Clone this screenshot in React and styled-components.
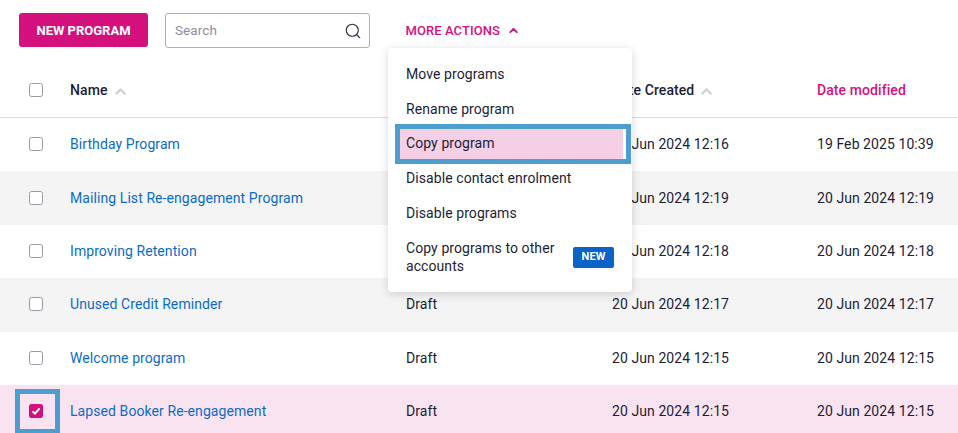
import React from 'react';
import styled, { createGlobalStyle } from 'styled-components';
import { ChevronUp, Search as SearchIcon } from 'lucide-react';

const GlobalStyle = createGlobalStyle`
  html, body {
    margin: 0;
    padding: 0;
    background: #fff;
    overflow: hidden;
  }
  body {
    font-family: Roboto, "Liberation Sans", sans-serif;
    font-size: 14px;
    letter-spacing: 0.08px;
    color: #1d1d36;
  }
`;

const Page = styled.div`
  position: relative;
  width: 958px;
  height: 433px;
  overflow: hidden;
`;

const Toolbar = styled.div`
  display: flex;
  align-items: flex-start;
  height: 62px;
  padding: 13px 0 0 19px;
  box-sizing: border-box;
`;

const PrimaryButton = styled.button`
  width: 129px;
  height: 34px;
  border: 0;
  border-radius: 3px;
  background: #d4107d;
  color: #fff;
  font: 700 13px Roboto, sans-serif;
  padding: 0;
`;

const SearchBox = styled.div`
  display: flex;
  align-items: center;
  justify-content: space-between;
  width: 205px;
  height: 35px;
  margin-left: 17px;
  padding: 0 7px 2px 9px;
  box-sizing: border-box;
  border: 1px solid #aeaeb6;
  border-radius: 3px;
  color: #8e8e9a;
  font-size: 13.5px;
  svg {
    margin-top: 3px;
    color: #30304a;
  }
`;

const ActionsToggle = styled.div`
  display: flex;
  align-items: center;
  gap: 7px;
  height: 34px;
  margin-left: 35.5px;
  color: #d4107d;
  font-size: 13px;
  font-weight: 500;
`;

const Row = styled.div`
  display: grid;
  grid-template-columns: 70px 336px 206px 205px 141px;
  align-items: center;
  box-sizing: border-box;
  height: ${(p) => (p.$header ? '56px' : '53.4px')};
  padding-bottom: ${(p) => (p.$header ? '0' : '1px')};
  background: ${(p) => p.$bg || '#fff'};
  border-bottom: ${(p) => (p.$header ? '1px solid #dedee0' : '0')};
`;

const CheckCell = styled.div`
  position: relative;
  display: flex;
  padding-left: 29px;
`;

const Checkbox = styled.span`
  display: flex;
  align-items: center;
  justify-content: center;
  width: ${(p) => (p.$checked ? '14px' : '12px')};
  height: ${(p) => (p.$checked ? '14px' : '12px')};
  border: ${(p) => (p.$checked ? '0' : '1px solid #9a9aa6')};
  border-radius: 2.5px;
  background: ${(p) => (p.$checked ? '#d4107d' : '#fff')};
`;

const HeaderCell = styled.div`
  display: flex;
  align-items: center;
  gap: 4px;
  font-weight: 500;
  color: ${(p) => (p.$active ? '#d4107d' : '#1d1d36')};
  svg {
    margin-top: 3px;
    color: #d0d0d3;
  }
`;

const NameLink = styled.a`
  color: #0a6cc9;
  font-size: 14px;
`;

const Cell = styled.div`
  font-size: 14px;
`;

const Callout = styled.div`
  position: absolute;
  box-sizing: border-box;
  border: 5px solid #4c9dd0;
  pointer-events: none;
`;

const CheckCallout = styled(Callout)`
  left: 15px;
  top: -15px;
  width: 45px;
  height: 45px;
`;

const Menu = styled.div`
  position: absolute;
  left: 388px;
  top: 48px;
  width: 244px;
  height: 244px;
  padding-top: 8.4px;
  box-sizing: border-box;
  background: #fff;
  border-radius: 4px;
  box-shadow: 0 2px 10px rgba(0, 0, 0, 0.16);
`;

const MenuItem = styled.div`
  position: relative;
  display: flex;
  align-items: center;
  justify-content: space-between;
  margin: ${(p) => (p.$tall ? '4px' : '0')} ${(p) => (p.$tall ? '18px' : '9px')} 0
    ${(p) => (p.$selected ? '12px' : '18px')};
  padding-left: ${(p) => (p.$selected ? '6px' : '0')};
  height: ${(p) => (p.$tall ? '46px' : '34.8px')};
  line-height: 18px;
  font-size: 14px;
  background: ${(p) => (p.$selected ? '#f5cfe5' : 'transparent')};
`;

const MenuLabel = styled.span`
  width: 160px;
`;

const NewBadge = styled.span`
  display: flex;
  align-items: center;
  justify-content: center;
  width: 41px;
  height: 21px;
  border-radius: 2px;
  background: #0a64c8;
  color: #fff;
  font-size: 11px;
  font-weight: 700;
`;

const MenuCallout = styled(Callout)`
  left: 7px;
  top: 76px;
  width: 236px;
  height: 40px;
`;

// the status of the first three rows sits behind the open menu
const rows = [
  ['Birthday Program', '', '20 Jun 2024 12:16', '19 Feb 2025 10:39'],
  ['Mailing List Re-engagement Program', '', '20 Jun 2024 12:19', '20 Jun 2024 12:19'],
  ['Improving Retention', '', '20 Jun 2024 12:18', '20 Jun 2024 12:18'],
  ['Unused Credit Reminder', 'Draft', '20 Jun 2024 12:17', '20 Jun 2024 12:17'],
  ['Welcome program', 'Draft', '20 Jun 2024 12:15', '20 Jun 2024 12:15'],
  ['Lapsed Booker Re-engagement', 'Draft', '20 Jun 2024 12:15', '20 Jun 2024 12:15'],
];

function rowBg(i) {
  if (i === 5) return '#fae3f0';
  return i % 2 === 1 ? '#f4f4f4' : '#fff';
}

export default function App() {
  return (
    <Page>
      <GlobalStyle />
      <Toolbar>
        <PrimaryButton>NEW PROGRAM</PrimaryButton>
        <SearchBox>
          Search
          <SearchIcon size={18} strokeWidth={1.5} />
        </SearchBox>
        <ActionsToggle>
          MORE ACTIONS
          <ChevronUp size={13} strokeWidth={3.5} />
        </ActionsToggle>
      </Toolbar>
      <Row $header>
        <CheckCell>
          <Checkbox />
        </CheckCell>
        <HeaderCell>
          Name
          <ChevronUp size={17} strokeWidth={3} />
        </HeaderCell>
        <HeaderCell />
        <HeaderCell>
          Date Created
          <ChevronUp size={17} strokeWidth={3} />
        </HeaderCell>
        <HeaderCell $active>Date modified</HeaderCell>
      </Row>
      {rows.map((r, i) => (
        <Row key={r[0]} $bg={rowBg(i)}>
          <CheckCell>
            {i === 5 ? (
              <>
                <Checkbox $checked>
                  <svg width="10" height="10" viewBox="0 0 10 10" fill="none">
                    <path d="M1.5 5.2 4 7.6 8.6 2.4" stroke="#fff" strokeWidth="1.9" />
                  </svg>
                </Checkbox>
                <CheckCallout />
              </>
            ) : (
              <Checkbox />
            )}
          </CheckCell>
          <NameLink>{r[0]}</NameLink>
          <Cell>{r[1]}</Cell>
          <Cell>{r[2]}</Cell>
          <Cell>{r[3]}</Cell>
        </Row>
      ))}
      <Menu>
        <MenuItem>Move programs</MenuItem>
        <MenuItem>Rename program</MenuItem>
        <MenuItem $selected>Copy program</MenuItem>
        <MenuItem>Disable contact enrolment</MenuItem>
        <MenuItem>Disable programs</MenuItem>
        <MenuItem $tall>
          <MenuLabel>Copy programs to other accounts</MenuLabel>
          <NewBadge>NEW</NewBadge>
        </MenuItem>
        <MenuCallout />
      </Menu>
    </Page>
  );
}
